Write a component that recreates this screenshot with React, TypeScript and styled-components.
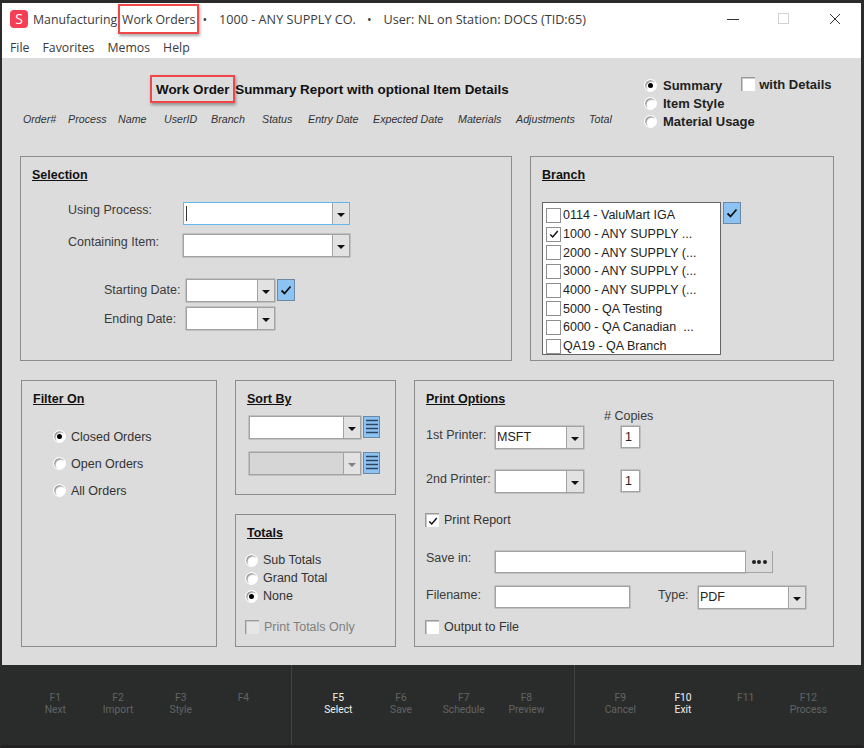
import React from 'react';
import styled, { createGlobalStyle } from 'styled-components';

const GlobalStyle = createGlobalStyle`
  html, body {
    margin: 0;
    padding: 0;
    background: #fff;
  }
  * {
    box-sizing: border-box;
  }
`;

const Frame = styled.div`
  width: 864px;
  height: 748px;
  display: flex;
  flex-direction: column;
  overflow: hidden;
  border-top: 3px solid #2b2b2b;
  border-left: 2px solid #2b2b2b;
  border-right: 3px solid #2b2b2b;
  border-bottom: 3px solid #222;
  font-family: 'Liberation Sans', Arial, sans-serif;
  font-size: 12.5px;
  color: #333;
`;

const TitleBar = styled.div`
  height: 30px;
  flex: none;
  background: #fff;
  display: flex;
  align-items: center;
  padding: 2px 0 0 8px;
  font-family: 'Open Sans', 'Noto Sans', sans-serif;
  font-size: 12.3px;
  color: #3a3a3a;
`;

const AppIcon = styled.div`
  width: 18px;
  height: 18px;
  border-radius: 4px;
  background: #f43f55;
  color: #fff;
  font-size: 14px;
  line-height: 18px;
  text-align: center;
  margin-right: 5px;
`;

const TitleInfo = styled.span`
  font-size: 12.65px;
`;

const TitleDot = styled.span`
  margin: 0 12px 0 ${p => p.$left}px;
`;

const Highlight = styled.span`
  position: relative;
  margin: ${p => (p.$large ? '0 2px 0 0' : '0 0 0 5px')};
  &::after {
    content: '';
    position: absolute;
    inset: ${p => (p.$large ? '-7px -5px -6px -6px' : '-7px -4px -6px -4px')};
    border: 2px solid #f0474b;
    box-shadow: 1px 2px 3px rgba(0, 0, 0, 0.35);
  }
`;

const WindowButtons = styled.div`
  margin-left: auto;
  display: flex;
  align-items: center;
  gap: 39px;
  padding-right: 20px;
`;

const MenuBar = styled.div`
  height: 25px;
  flex: none;
  background: #fff;
  display: flex;
  align-items: center;
  gap: 13px;
  padding: 4px 0 0 8px;
  font-family: 'Open Sans', 'Noto Sans', sans-serif;
  font-size: 12.3px;
  color: #3a3a3a;
`;

const Body = styled.div`
  flex: 1;
  background: #dcdcdc;
  padding: 0 27px 18px 18px;
  display: flex;
  flex-direction: column;
`;

const Header = styled.div`
  height: 98px;
  flex: none;
  display: flex;
`;

const HeaderLeft = styled.div`
  width: 624px;
  flex: none;
`;

const ReportTitle = styled.div`
  margin: 23px 0 0 136px;
  font-size: 13.42px;
  line-height: 18px;
  font-weight: bold;
  color: #111;
`;

const Columns = styled.div`
  display: flex;
  margin: 14px 0 0 3px;
  font-size: 10.7px;
  line-height: 13px;
  font-style: italic;
  color: #333;
`;

const Column = styled.span`
  width: ${p => p.$w}px;
  flex: none;
`;

const ReportOptions = styled.div`
  padding-top: 18.4px;
  font-weight: bold;
  font-size: 13px;
  color: #222;
`;

const ReportRadioRow = styled.div`
  height: 18px;
  display: flex;
  align-items: center;
  gap: 6px;
  white-space: nowrap;
`;

const Details = styled.div`
  display: flex;
  align-items: center;
  gap: 4px;
  margin: -2px 0 0 13px;
`;

const Radio = styled.span`
  width: 13px;
  height: 13px;
  flex: none;
  border-radius: 50%;
  background: #fff;
  border: 1px solid #fff;
  box-shadow: inset 1.5px 1.5px 1px #a0a0a0;
  display: flex;
  align-items: center;
  justify-content: center;
  &::after {
    content: '';
    width: 5px;
    height: 5px;
    border-radius: 50%;
    background: ${p => (p.$on ? '#000' : 'transparent')};
  }
`;

const Box = styled.span`
  width: 14px;
  height: 14px;
  flex: none;
  background: ${p => (p.$disabled ? '#e6e6e6' : '#fff')};
  border-top: 1px solid #9a9a9a;
  border-left: 1px solid #9a9a9a;
  box-shadow: inset 1px 1px 0 #c8c8c8;
  display: flex;
  align-items: center;
  justify-content: center;
`;

const Panels = styled.div`
  flex: 1;
  margin-left: 1px;
  display: grid;
  grid-template-columns: 196px 18px 161px 18px 1fr;
  grid-template-rows: 115px 133px;
  row-gap: 19px;
`;

const TopPanels = styled.div`
  display: flex;
  justify-content: space-between;
  height: 205px;
  flex: none;
  margin-bottom: 19px;
`;

const Panel = styled.section`
  width: ${p => (p.$w ? `${p.$w}px` : 'auto')};
  grid-column: ${p => p.$col || 'auto'};
  grid-row: ${p => p.$row || 'auto'};
  border: 1.5px solid #8c8c8c;
  padding: 10px 11px 9px;
`;

const PanelTitle = styled.h2`
  margin: 0;
  font-size: 12.5px;
  line-height: 16px;
  font-weight: bold;
  color: #111;
  text-decoration: underline;
`;

const FieldRow = styled.div`
  display: flex;
  align-items: flex-start;
  margin: ${p => p.$m || '0'};
`;

const FieldLabel = styled.label`
  width: ${p => p.$w}px;
  flex: none;
  margin-left: ${p => p.$ml ?? 0}px;
  line-height: 15px;
  padding-top: ${p => p.$top ?? 0}px;
  color: #3a3a3a;
`;

const Combo = styled.div`
  width: ${p => p.$w}px;
  height: 23px;
  flex: none;
  display: flex;
  background: ${p => (p.$disabled ? '#d6d6d6' : '#fff')};
  border: 1px solid ${p => (p.$focus ? '#62b5ee' : '#a3a3a3')};
  box-shadow: ${p => (p.$focus ? 'none' : '0 0 0 0.5px #a3a3a3')};
`;

const ComboText = styled.span`
  flex: 1;
  padding-left: 1px;
  line-height: 21px;
  font-size: 12.5px;
  color: #222;
`;

const Caret = styled.span`
  display: block;
  width: 1px;
  height: 15px;
  background: #333;
  margin: 3px 0 0 1px;
`;

const ComboButton = styled.span`
  width: 17px;
  flex: none;
  background: #e2e2e2;
  border-left: 1px solid #a3a3a3;
  display: flex;
  align-items: center;
  justify-content: center;
  &::after {
    content: '';
    margin-top: 2px;
    border-left: 4px solid transparent;
    border-right: 4px solid transparent;
    border-top: 4px solid ${p => (p.$disabled ? '#808080' : '#111')};
  }
`;

const BlueButton = styled.span`
  width: ${p => p.$w ?? 18}px;
  height: 22px;
  flex: none;
  margin-left: ${p => p.$ml ?? 2}px;
  background: #8cc3f2;
  border: 1px solid #6b89a5;
  display: flex;
  align-items: center;
  justify-content: center;
`;

const BranchBody = styled.div`
  display: flex;
  align-items: flex-start;
  margin-top: 19px;
`;

const BranchList = styled.ul`
  width: 179px;
  height: 153px;
  margin: 0;
  padding: 3px 0 0 3px;
  list-style: none;
  background: #fff;
  border: 1px solid #666;
  color: #222;
`;

const BranchItem = styled.li`
  height: 18.7px;
  display: flex;
  align-items: center;
  gap: 2px;
  white-space: pre;
`;

const BranchBox = styled.span`
  width: 15px;
  height: 15px;
  flex: none;
  background: #fff;
  border: 1px solid #8e8e8e;
  display: flex;
  align-items: center;
  justify-content: center;
`;

const OptionList = styled.div`
  display: flex;
  flex-direction: column;
  margin: ${p => p.$m};
`;

const OptionRow = styled.div`
  height: ${p => p.$h}px;
  display: flex;
  align-items: center;
  gap: ${p => p.$gap ?? 5}px;
  margin: ${p => p.$m || '0'};
  color: ${p => (p.$disabled ? '#808080' : '#333')};
`;

const SortRow = styled.div`
  display: flex;
  margin: ${p => p.$m};
`;

const TextInput = styled.div`
  width: ${p => p.$w}px;
  height: 22px;
  flex: none;
  margin-left: ${p => p.$ml ?? 0}px;
  background: #fff;
  border: 1px solid #a3a3a3;
  box-shadow: 0 0 0 0.5px #a3a3a3;
  line-height: 20px;
  padding-left: 3px;
  color: #222;
`;

const CopiesHead = styled.div`
  margin: 2px 0 2px 178px;
  line-height: 15px;
  color: #3a3a3a;
`;

const BrowseButton = styled.span`
  width: 27px;
  height: 22px;
  flex: none;
  background: #dcdcdc;
  border-right: 1px solid #a3a3a3;
  border-bottom: 1px solid #a3a3a3;
  display: flex;
  align-items: center;
  justify-content: center;
  gap: 1.5px;
  padding-top: 1px;
`;

const Dot = styled.span`
  width: 4px;
  height: 4px;
  border-radius: 50%;
  background: #222;
`;

const Footer = styled.footer`
  height: 80px;
  flex: none;
  background: #2a2c2c;
  display: flex;
`;

const KeyGroup = styled.div`
  display: flex;
  width: ${p => p.$w}px;
  flex: none;
  padding-left: ${p => p.$pad}px;
  padding-top: 27px;
  border-right: ${p => (p.$last ? 'none' : '1px solid #414343')};
`;

const Key = styled.div`
  width: 62.7px;
  flex: none;
  text-align: center;
  font-family: Roboto, 'Liberation Sans', sans-serif;
  font-size: 10.3px;
  line-height: 12px;
  color: ${p => (p.$on ? '#f0f0f0' : '#626464')};
`;

const Check = ({ size = 12 }: { size?: number }) => (
  <svg width={size} height={size} viewBox="0 0 12 12" fill="none">
    <path d="M1.5 6.5 L4.5 9.5 L10.5 2.5" stroke="#111" strokeWidth="1.8" />
  </svg>
);

const ListIcon = () => (
  <svg width="12" height="18" viewBox="0 0 12 18" fill="none" stroke="#2c4460" strokeWidth="1.4">
    <path d="M0 2.5H12M0 6.5H12M0 10.5H12M0 14.5H12" />
  </svg>
);

const columns: [string, number][] = [
  ['Order#', 45],
  ['Process', 50],
  ['Name', 46],
  ['UserID', 47],
  ['Branch', 51],
  ['Status', 46],
  ['Entry Date', 65],
  ['Expected Date', 85],
  ['Materials', 58],
  ['Adjustments', 73],
  ['Total', 40],
];

const branches = [
  '0114 - ValuMart IGA',
  '1000 - ANY SUPPLY ...',
  '2000 - ANY SUPPLY (...',
  '3000 - ANY SUPPLY (...',
  '4000 - ANY SUPPLY (...',
  '5000 - QA Testing',
  '6000 - QA Canadian  ...',
  'QA19 - QA Branch',
];

const keyGroups = [
  {
    w: 290,
    pad: 22,
    keys: [['F1', 'Next'], ['F2', 'Import'], ['F3', 'Style'], ['F4', '']],
  },
  {
    w: 283,
    pad: 15,
    keys: [['F5', 'Select', true], ['F6', 'Save'], ['F7', 'Schedule'], ['F8', 'Preview']],
  },
  {
    w: 286,
    pad: 14,
    keys: [['F9', 'Cancel'], ['F10', 'Exit', true], ['F11', ''], ['F12', 'Process']],
  },
];

export default function App() {
  return (
    <Frame>
      <GlobalStyle />
      <TitleBar>
        <AppIcon>S</AppIcon>
        <span>Manufacturing</span>
        <Highlight>Work Orders</Highlight>
        <TitleDot $left={7}>•</TitleDot>
        <TitleInfo>1000 - ANY SUPPLY CO.</TitleInfo>
        <TitleDot $left={11}>•</TitleDot>
        <TitleInfo>User: NL on Station: DOCS (TID:65)</TitleInfo>
        <WindowButtons>
          <svg width="12" height="12" viewBox="0 0 12 12" stroke="#333">
            <path d="M0 6.5H12" />
          </svg>
          <svg width="12" height="12" viewBox="0 0 12 12" fill="none" stroke="#d2d2d2">
            <rect x="0.5" y="0.5" width="10" height="10" />
          </svg>
          <svg width="12" height="12" viewBox="0 0 12 12" stroke="#333">
            <path d="M1 1L11 11M11 1L1 11" />
          </svg>
        </WindowButtons>
      </TitleBar>
      <MenuBar>
        <span>File</span>
        <span>Favorites</span>
        <span>Memos</span>
        <span>Help</span>
      </MenuBar>

      <Body>
        <Header>
          <HeaderLeft>
            <ReportTitle>
              <Highlight $large>Work Order</Highlight> Summary Report with optional Item Details
            </ReportTitle>
            <Columns>
              {columns.map(([name, w]) => (
                <Column key={name} $w={w}>
                  {name}
                </Column>
              ))}
            </Columns>
          </HeaderLeft>
          <ReportOptions>
            <ReportRadioRow>
              <Radio $on />
              <span>Summary</span>
              <Details>
                <Box />
                <span>with Details</span>
              </Details>
            </ReportRadioRow>
            <ReportRadioRow>
              <Radio />
              <span>Item Style</span>
            </ReportRadioRow>
            <ReportRadioRow>
              <Radio />
              <span>Material Usage</span>
            </ReportRadioRow>
          </ReportOptions>
        </Header>

        <TopPanels>
          <Panel $w={492}>
            <PanelTitle>Selection</PanelTitle>
            <FieldRow $m="19px 0 0 36px">
              <FieldLabel $w={115} $top={1}>
                Using Process:
              </FieldLabel>
              <Combo $w={167} $focus>
                <ComboText>
                  <Caret />
                </ComboText>
                <ComboButton />
              </Combo>
            </FieldRow>
            <FieldRow $m="9px 0 0 36px">
              <FieldLabel $w={115} $top={1}>
                Containing Item:
              </FieldLabel>
              <Combo $w={167}>
                <ComboText />
                <ComboButton />
              </Combo>
            </FieldRow>
            <FieldRow $m="22px 0 0 72px">
              <FieldLabel $w={82} $top={4}>
                Starting Date:
              </FieldLabel>
              <Combo $w={89}>
                <ComboText />
                <ComboButton />
              </Combo>
              <BlueButton>
                <Check />
              </BlueButton>
            </FieldRow>
            <FieldRow $m="5px 0 0 72px">
              <FieldLabel $w={82} $top={5}>
                Ending Date:
              </FieldLabel>
              <Combo $w={89}>
                <ComboText />
                <ComboButton />
              </Combo>
            </FieldRow>
          </Panel>
          <Panel $w={304}>
            <PanelTitle>Branch</PanelTitle>
            <BranchBody>
              <BranchList>
                {branches.map((b, i) => (
                  <BranchItem key={b}>
                    <BranchBox>{i === 1 && <Check size={10} />}</BranchBox>
                    <span>{b}</span>
                  </BranchItem>
                ))}
              </BranchList>
              <BlueButton $ml={2}>
                <Check />
              </BlueButton>
            </BranchBody>
          </Panel>
        </TopPanels>

        <Panels>
          <Panel $col="1" $row="1 / 3">
            <PanelTitle>Filter On</PanelTitle>
            <OptionList $m="16px 0 0 20px">
              <OptionRow $h={27}>
                <Radio $on />
                <span>Closed Orders</span>
              </OptionRow>
              <OptionRow $h={27}>
                <Radio />
                <span>Open Orders</span>
              </OptionRow>
              <OptionRow $h={27}>
                <Radio />
                <span>All Orders</span>
              </OptionRow>
            </OptionList>
          </Panel>

          <Panel $col="3" $row="1">
            <PanelTitle>Sort By</PanelTitle>
            <SortRow $m="9px 0 0 2px">
              <Combo $w={112}>
                <ComboText />
                <ComboButton />
              </Combo>
              <BlueButton $w={17} $ml={2}>
                <ListIcon />
              </BlueButton>
            </SortRow>
            <SortRow $m="13px 0 0 2px">
              <Combo $w={112} $disabled>
                <ComboText />
                <ComboButton $disabled />
              </Combo>
              <BlueButton $w={17} $ml={2}>
                <ListIcon />
              </BlueButton>
            </SortRow>
          </Panel>

          <Panel $col="3" $row="2">
            <PanelTitle>Totals</PanelTitle>
            <OptionList $m="10px 0 0 -2px">
              <OptionRow $h={18}>
                <Radio />
                <span>Sub Totals</span>
              </OptionRow>
              <OptionRow $h={18}>
                <Radio />
                <span>Grand Total</span>
              </OptionRow>
              <OptionRow $h={18}>
                <Radio $on />
                <span>None</span>
              </OptionRow>
              <OptionRow $h={18} $disabled $m="13px 0 0">
                <Box $disabled />
                <span>Print Totals Only</span>
              </OptionRow>
            </OptionList>
          </Panel>

          <Panel $col="5" $row="1 / 3">
            <PanelTitle>Print Options</PanelTitle>
            <CopiesHead># Copies</CopiesHead>
            <FieldRow>
              <FieldLabel $w={69} $top={2}>
                1st Printer:
              </FieldLabel>
              <Combo $w={89}>
                <ComboText>MSFT</ComboText>
                <ComboButton />
              </Combo>
              <TextInput $w={19} $ml={37}>
                1
              </TextInput>
            </FieldRow>
            <FieldRow $m="21px 0 0 0">
              <FieldLabel $w={69} $top={2}>
                2nd Printer:
              </FieldLabel>
              <Combo $w={89}>
                <ComboText />
                <ComboButton />
              </Combo>
              <TextInput $w={19} $ml={37}>
                1
              </TextInput>
            </FieldRow>
            <OptionRow $h={18} $m="18px 0 0 -1px">
              <Box>
                <Check size={10} />
              </Box>
              <span>Print Report</span>
            </OptionRow>
            <FieldRow $m="22px 0 0 0">
              <FieldLabel $w={69}>Save in:</FieldLabel>
              <TextInput $w={251} />
              <BrowseButton>
                <Dot />
                <Dot />
                <Dot />
              </BrowseButton>
            </FieldRow>
            <FieldRow $m="13px 0 0 0">
              <FieldLabel $w={69} $top={2}>
                Filename:
              </FieldLabel>
              <TextInput $w={135} />
              <FieldLabel $w={40} $ml={28} $top={2}>
                Type:
              </FieldLabel>
              <Combo $w={108}>
                <ComboText>PDF</ComboText>
                <ComboButton />
              </Combo>
            </FieldRow>
            <OptionRow $h={18} $m="9px 0 0 -1px">
              <Box />
              <span>Output to File</span>
            </OptionRow>
          </Panel>
        </Panels>
      </Body>

      <Footer>
        {keyGroups.map((g, i) => (
          <KeyGroup key={i} $w={g.w} $pad={g.pad} $last={i === 2}>
            {g.keys.map(([fn, label, on]) => (
              <Key key={fn as string} $on={on}>
                <div>{fn}</div>
                <div>{label}</div>
              </Key>
            ))}
          </KeyGroup>
        ))}
      </Footer>
    </Frame>
  );
}
